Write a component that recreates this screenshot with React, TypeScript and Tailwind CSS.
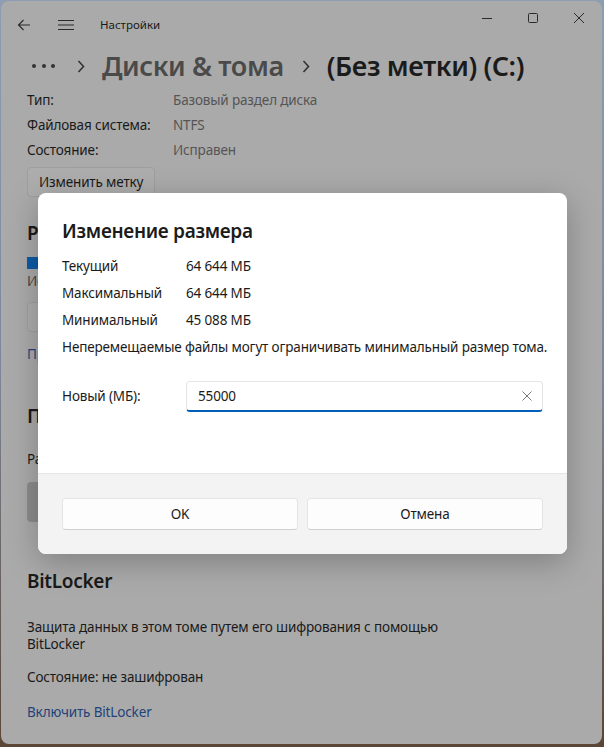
import React from "react";

const ink = "text-[#1a1a1a]";
const body = "text-[13.5px] tracking-[-0.15px]";

function BackArrow() {
  return (
    <svg width="14" height="14" viewBox="0 0 14 14" fill="none" stroke="#2a2a2a" strokeWidth="1.1">
      <path d="M13 7H1.5M6.5 2L1.5 7l5 5" />
    </svg>
  );
}

function Hamburger() {
  return (
    <svg width="16" height="12" viewBox="0 0 16 12" fill="none" stroke="#2a2a2a" strokeWidth="1.1">
      <path d="M0 1.5h16M0 6h16M0 10.5h16" />
    </svg>
  );
}

function Chevron() {
  return (
    <svg width="8" height="13" viewBox="0 0 8 13" fill="none" stroke="#333" strokeWidth="1.6">
      <path d="M1.5 1l5 5.5-5 5.5" />
    </svg>
  );
}

function WindowControls() {
  return (
    <div className="flex items-center h-full">
      <div className="w-[46px] flex justify-center">
        <svg width="10" height="10" viewBox="0 0 10 10" stroke="#2a2a2a" strokeWidth="1">
          <path d="M0 5.5h10" />
        </svg>
      </div>
      <div className="w-[46px] flex justify-center">
        <svg width="10" height="10" viewBox="0 0 10 10" fill="none" stroke="#2a2a2a" strokeWidth="1">
          <rect x="0.5" y="0.5" width="9" height="9" rx="1" />
        </svg>
      </div>
      <div className="w-[46px] flex justify-center">
        <svg width="10" height="10" viewBox="0 0 10 10" stroke="#2a2a2a" strokeWidth="1">
          <path d="M0 0l10 10M10 0L0 10" />
        </svg>
      </div>
    </div>
  );
}

function InfoRow({ label, value }: { label: string; value: string }) {
  return (
    <div className={`flex h-[25px] items-center ${body}`}>
      <span className={`w-[146px] ${ink}`}>{label}</span>
      <span className="text-[#555555]">{value}</span>
    </div>
  );
}

function ResizeDialog() {
  const rows = [
    ["Текущий", "64 644 МБ"],
    ["Максимальный", "64 644 МБ"],
    ["Минимальный", "45 088 МБ"],
  ];
  return (
    <div className="absolute left-[38px] top-[193px] w-[529px] h-[361px] rounded-lg bg-white overflow-hidden shadow-[0_8px_32px_rgba(0,0,0,0.25)] flex flex-col">
      <div className={`h-[280px] px-6 pt-6 text-[#1b1b1b] ${body}`}>
        <h2 className="text-[19px] tracking-[-0.3px] leading-[28px] font-semibold">Изменение размера</h2>
        <div className="mt-[8px]">
          {rows.map(([l, v]) => (
            <div key={l} className="flex leading-[27px]">
              <span className="w-[124px]">{l}</span>
              <span>{v}</span>
            </div>
          ))}
          <p className="leading-[27px] whitespace-nowrap">Неперемещаемые файлы могут ограничивать минимальный размер тома.</p>
        </div>
        <div className="mt-[20px] flex items-center">
          <span className="w-[124px]">Новый (МБ):</span>
          <div className="flex-1 h-[31px] flex items-center rounded-[4px] border border-[#e5e5e5] border-b-2 border-b-[#005fb8] pl-[11px] pr-[10px]">
            <span className="flex-1">55000</span>
            <svg width="10" height="10" viewBox="0 0 10 10" stroke="#6a6a6a" strokeWidth="0.9">
              <path d="M0.5 0.5l9 9M9.5 0.5l-9 9" />
            </svg>
          </div>
        </div>
      </div>
      <div className="flex-1 bg-[#f3f3f3] border-t border-[#e5e5e5] px-6 pt-6">
        <div className="grid grid-cols-2 gap-[9px]">
          <button className={`h-[32px] rounded-[4px] bg-[#fdfdfd] border border-[#e5e5e5] border-b-[#d0d0d0] ${body} text-[#1b1b1b]`}>
            OK
          </button>
          <button className={`h-[32px] rounded-[4px] bg-[#fdfdfd] border border-[#e5e5e5] border-b-[#d0d0d0] ${body} text-[#1b1b1b]`}>
            Отмена
          </button>
        </div>
      </div>
    </div>
  );
}

export default function App() {
  return (
    <div className="relative w-[604px] h-[747px] overflow-hidden bg-[linear-gradient(180deg,#8d9db3_0%,#7c8698_50%,#5a4636_100%)] pl-[1px] pt-[1px] font-['Noto_Sans',sans-serif]">
      <div className="w-[601px] h-[743px] rounded-lg bg-[#aaaaaa] overflow-hidden flex flex-col">
        <div className="h-[48px] flex items-center shrink-0">
          <div className="ml-[16px]">
            <BackArrow />
          </div>
          <div className="ml-[27px]">
            <Hamburger />
          </div>
          <span className={`ml-[26px] text-[11.5px] ${ink}`}>Настройки</span>
          <div className="ml-auto h-full pt-[1px] flex items-start">
            <div className="h-[32px] flex items-center">
              <WindowControls />
            </div>
          </div>
        </div>

        <div className="h-[43px] shrink-0 flex items-start pl-[31px]">
          <div className="h-[34px] flex items-center gap-[5.5px]">
            <span className="w-[4px] h-[4px] rounded-full bg-[#333]" />
            <span className="w-[4px] h-[4px] rounded-full bg-[#333]" />
            <span className="w-[4px] h-[4px] rounded-full bg-[#333]" />
          </div>
          <div className="h-[34px] flex items-center ml-[22px]">
            <Chevron />
          </div>
          <span className="ml-[17px] text-[27px] tracking-[-0.4px] leading-[34px] font-semibold text-[#4a4a4a]">Диски &amp; тома</span>
          <div className="h-[34px] flex items-center ml-[18px]">
            <Chevron />
          </div>
          <span className="ml-[17px] text-[27px] tracking-[-0.4px] leading-[34px] font-semibold text-[#1b1b1b]">(Без метки) (C:)</span>
        </div>

        <div className="flex-1 overflow-hidden px-[26px]">
          <div className="-mt-[4px]">
            <InfoRow label="Тип:" value="Базовый раздел диска" />
            <InfoRow label="Файловая система:" value="NTFS" />
            <InfoRow label="Состояние:" value="Исправен" />
            <button className={`mt-[4px] h-[30px] px-[11px] rounded-[4px] border border-[#9e9e9e] bg-[#adadad] ${body} ${ink}`}>
              Изменить метку
            </button>

            <h3 className={`mt-[22px] text-[19px] tracking-[-0.3px] leading-[28px] font-semibold ${ink}`}>Размер</h3>
            <div className="mt-[10px] h-[12px] w-[300px] bg-[#9a9a9a]">
              <div className="h-full w-[70%] bg-[#0d5ba6]" />
            </div>
            <p className={`mt-[2px] ${body} leading-[20px] text-[#444]`}>Используется: 19,3 ГБ, свободно: 43,8 ГБ</p>
            <button className={`mt-[11px] h-[30px] px-[11px] rounded-[4px] border border-[#9e9e9e] bg-[#adadad] ${body} ${ink}`}>
              Изменить размер
            </button>
            <p className={`mt-[12px] ${body} leading-[20px] text-[#1f4680]`}>Просмотр использования пространства</p>

            <h3 className={`mt-[38px] text-[19px] tracking-[-0.3px] leading-[28px] font-semibold ${ink}`}>Пути</h3>
            <p className={`mt-[19px] ${body} leading-[20px] ${ink}`}>Разрешить доступ к этому тому по следующим путям</p>
            <div className="mt-[13px] h-[40px] w-[300px] rounded-[4px] bg-[#8c8c8c]" />

            <h3 className={`mt-[45px] text-[19px] tracking-[-0.3px] leading-[28px] font-semibold ${ink}`}>BitLocker</h3>
            <p className={`mt-[24px] ${body} leading-[17px] ${ink}`}>
              Защита данных в этом томе путем его шифрования с помощью
              <br />
              BitLocker
            </p>
            <p className={`mt-[14px] ${body} leading-[20px] ${ink}`}>Состояние: не зашифрован</p>
            <p className={`mt-[15px] ${body} leading-[20px] text-[#22437a]`}>Включить BitLocker</p>
          </div>
        </div>
      </div>
      <ResizeDialog />
    </div>
  );
}
